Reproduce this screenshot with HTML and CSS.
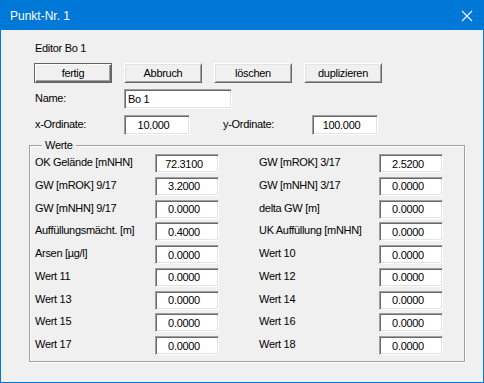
FILE: index.html
```html
<!DOCTYPE html>
<html lang="de">
<head>
    <meta charset="UTF-8">
    <title>Punkt-Nr. 1</title>
    <link rel="stylesheet" href="styles.css">
</head>
<body>
    <div class="window">
        <div class="titlebar">
            <span class="title">Punkt-Nr. 1</span>
            <svg class="close" width="12" height="12" viewBox="0 0 12 12">
                <path d="M1 1 L11 11 M11 1 L1 11" stroke="#fff" stroke-width="1.1" fill="none"/>
            </svg>
        </div>
        <div class="content">
            <div class="caption">Editor Bo 1</div>
            <div class="buttons">
                <button class="btn default">fertig</button>
                <button class="btn">Abbruch</button>
                <button class="btn">löschen</button>
                <button class="btn">duplizieren</button>
            </div>
            <div class="field-row">
                <label class="field-label">Name:</label>
                <input class="edit name" type="text" value="Bo 1">
            </div>
            <div class="field-row">
                <label class="field-label">x-Ordinate:</label>
                <input class="edit coord" type="text" value="10.000">
                <label class="field-label y-label">y-Ordinate:</label>
                <input class="edit coord" type="text" value="100.000">
            </div>
            <fieldset class="group">
                <legend>Werte</legend>
                <div class="values">
                    <label>OK Gelände [mNHN]</label><input class="edit num" value="72.3100">
                    <label>GW [mROK] 3/17</label><input class="edit num" value="2.5200">
                    <label>GW [mROK] 9/17</label><input class="edit num" value="3.2000">
                    <label>GW [mNHN] 3/17</label><input class="edit num" value="0.0000">
                    <label>GW [mNHN] 9/17</label><input class="edit num" value="0.0000">
                    <label>delta GW [m]</label><input class="edit num" value="0.0000">
                    <label>Auffüllungsmächt. [m]</label><input class="edit num" value="0.4000">
                    <label>UK Auffüllung [mNHN]</label><input class="edit num" value="0.0000">
                    <label>Arsen [µg/l]</label><input class="edit num" value="0.0000">
                    <label>Wert 10</label><input class="edit num" value="0.0000">
                    <label>Wert 11</label><input class="edit num" value="0.0000">
                    <label>Wert 12</label><input class="edit num" value="0.0000">
                    <label>Wert 13</label><input class="edit num" value="0.0000">
                    <label>Wert 14</label><input class="edit num" value="0.0000">
                    <label>Wert 15</label><input class="edit num" value="0.0000">
                    <label>Wert 16</label><input class="edit num" value="0.0000">
                    <label>Wert 17</label><input class="edit num" value="0.0000">
                    <label>Wert 18</label><input class="edit num" value="0.0000">
                </div>
            </fieldset>
        </div>
    </div>
</body>
</html>
```

FILE: styles.css
```css
body {
    margin: 0;
    background: #f0f0f0;
    font-family: 'Liberation Sans', Arial, sans-serif;
    font-size: 11px;
    letter-spacing: -0.3px;
    line-height: 14px;
    color: #000;
}
.window {
    width: 484px;
    height: 383px;
    box-sizing: border-box;
    border: 1px solid #0078d7;
    background: #f0f0f0;
}
.titlebar {
    height: 29px;
    background: #0078d7;
    color: #fff;
    display: flex;
    align-items: center;
    justify-content: space-between;
    padding: 0 10px 0 9px;
}
.title {
    font-size: 12px;
    letter-spacing: 0;
}
.close {
    margin-top: 1px;
}
.content {
    padding: 11px 0 0 33px;
}
.caption {
    padding-left: 1px;
}
.buttons {
    display: flex;
    gap: 12px;
    margin-top: 8px;
}
.btn {
    width: 78px;
    height: 20px;
    box-sizing: border-box;
    padding: 0;
    font: inherit;
    letter-spacing: inherit;
    color: #000;
    background: #f0f0f0;
    border: 1px solid;
    border-color: #fff #696969 #696969 #fff;
    box-shadow: inset 1px 1px #e3e3e3, inset -1px -1px #a0a0a0;
}
.btn.default {
    border-color: #646464;
    box-shadow: inset 1px 1px #fff, inset -1px -1px #696969, inset -2px -2px #a0a0a0;
}
.field-row {
    display: flex;
    align-items: center;
    margin-top: 6px;
}
.field-label {
    width: 90px;
    padding-left: 1px;
    box-sizing: border-box;
    margin-top: -2px;
}
.y-label {
    margin-left: 32px;
}
.edit {
    box-sizing: border-box;
    height: 20px;
    margin: 0;
    padding: 0;
    font: inherit;
    letter-spacing: inherit;
    color: #000;
    background: #fff;
    border: 1px solid;
    border-color: #a0a0a0 #fff #fff #a0a0a0;
    box-shadow: inset 1px 1px #696969, inset -1px -1px #e3e3e3;
    outline: none;
}
.name {
    width: 108px;
    padding-left: 3px;
}
.coord {
    width: 66px;
    text-align: center;
    padding-right: 7px;
}
.group {
    margin: 3px 0 0 -5px;
    width: 436px;
    height: 224px;
    box-sizing: border-box;
    padding: 2px 20px 0 5px;
    border: 1px solid #a0a0a0;
    box-shadow: inset 1px 1px #fff, 1px 1px #fff;
}
.group legend {
    margin-left: 7px;
    padding: 0 3px;
    background: #f0f0f0;
}
.values {
    display: grid;
    grid-template-columns: 120px 104px 120px 64px;
    grid-auto-rows: 22.75px;
    align-items: start;
}
.values label {
    line-height: 16px;
}
.num {
    width: 64px;
    height: 19px;
    text-align: center;
    padding-right: 6px;
}
```
